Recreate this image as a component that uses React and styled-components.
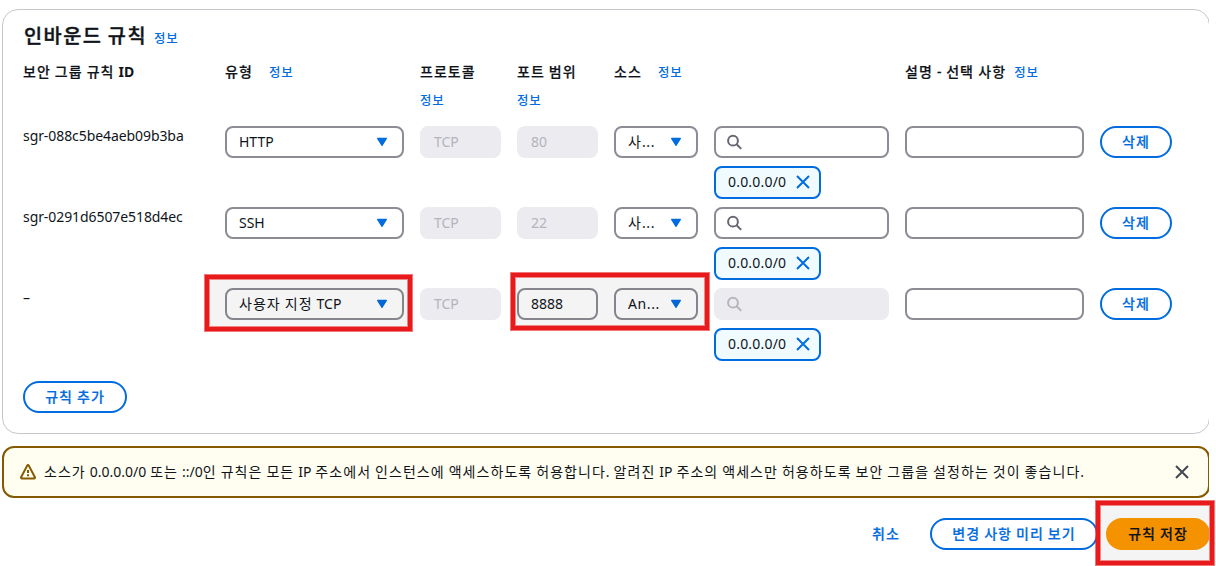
import React from "react";
import styled, { createGlobalStyle, css } from "styled-components";

const blue = "#006ce0";
const ink = "#0f141a";

const GlobalStyle = createGlobalStyle`
  * { box-sizing: border-box; }
  body {
    margin: 0;
    background: #fff;
    color: ${ink};
    font-family: "Noto Sans", "Noto Sans CJK KR", sans-serif;
    font-size: 14px;
    line-height: 20px;
    overflow: hidden;
  }
`;

const Page = styled.main`
  position: relative;
  width: 1216px;
  height: 566px;
  overflow: hidden;
`;

const Content = styled.div`
  width: 1209px;
  height: 566px;
  padding: 9px 0 0 2px;
  overflow: hidden;
  display: flex;
  flex-direction: column;
  & > * { width: 1208px; flex: none; }
`;

const Panel = styled.section`
  height: 425px;
  border: 1px solid #c6c6cd;
  border-radius: 16px;
  padding: 0 20px;
`;

const Run = styled.span`
  white-space: pre;
  word-spacing: 0.3px;
  letter-spacing: ${(p) => p.$ls || 0}px;
`;

const Hangul = styled.span`
  letter-spacing: 0.075em;
`;

/* Hangul syllables are set wider than the Latin text around them. */
const Text = ({ children, ls }) => (
  <Run $ls={ls}>
    {children.split(/([가-힣]+)/).map((part, i) => (i % 2 ? <Hangul key={i}>{part}</Hangul> : part))}
  </Run>
);

const TitleBar = styled.header`
  display: flex;
  align-items: baseline;
  gap: 7px;
  height: 48px;
  padding: 14px 0 0 1px;
`;

const Title = styled.h2`
  margin: 0;
  font-size: 19.7px;
  line-height: 24px;
  font-weight: 500;
  -webkit-text-stroke: 0.4px currentColor;
`;

const InfoLink = styled.a`
  color: ${blue};
  font-size: 12.4px;
  font-weight: 500;
  line-height: 22px;
  white-space: nowrap;
`;

const Info = () => <InfoLink><Text>정보</Text></InfoLink>;

const Grid = styled.div`
  display: grid;
  grid-template-columns: 186px 179px 81px 81px 84px 175px 179px 72px;
  column-gap: 16px;
`;

const HeadGrid = styled(Grid)`
  height: 68px;
  padding-top: 4px;
`;

const HeadCell = styled.div`
  display: flex;
  flex-direction: ${(p) => (p.$stack ? "column" : "row")};
  gap: ${(p) => (p.$stack ? 8 : p.$gap)}px;
  font-weight: 500;
  white-space: nowrap;
  height: 20px;
  & > ${Run} { -webkit-text-stroke: 0.2px currentColor; }
`;

const Strong = styled.b`
  font-weight: 700;
`;

const RuleGrid = styled(Grid)`
  height: 81px;
`;

const RuleId = styled.div`
  white-space: nowrap;
  letter-spacing: -0.08px;
`;

const field = css`
  height: 32px;
  border: 2px solid #8c8c94;
  border-radius: 8px;
  display: flex;
  align-items: center;
  padding: 0 12px;
  white-space: nowrap;
`;

const Field = styled.div`
  ${field}
  ${(p) => p.$disabled && css`
    background: #ebebf0;
    border-color: #ebebf0;
    color: #b4b4bb;
  `}
`;

const SearchField = styled(Field)`
  padding-left: 11px;
`;

const Select = styled.div`
  ${field}
  justify-content: space-between;
  padding-right: 14px;
`;

const SourceCell = styled.div`
  display: flex;
  flex-direction: column;
  align-items: flex-start;
  gap: 8px;
  & > :first-child { width: 100%; }
`;

const Tag = styled.div`
  height: 33px;
  width: 107px;
  border: 2px solid ${blue};
  border-radius: 8px;
  background: #f0fbff;
  display: flex;
  align-items: center;
  justify-content: space-between;
  padding: 0 8px 1px 12px;
`;

const Button = styled.button`
  height: 32px;
  width: ${(p) => p.$w}px;
  padding: 0 0 1px;
  border: 2px solid ${(p) => ({ normal: blue, primary: "#ff9900", link: "transparent" })[p.$kind]};
  border-radius: 16px;
  background: ${(p) => (p.$kind === "primary" ? "#ff9900" : "transparent")};
  color: ${(p) => (p.$kind === "primary" ? ink : blue)};
  font: 500 14px/20px "Noto Sans", "Noto Sans CJK KR", sans-serif;
  -webkit-text-stroke: 0.2px currentColor;
  white-space: nowrap;
`;

const AddRow = styled.div`
  padding-top: 12px;
`;

const Alert = styled.div`
  margin-top: 12px;
  height: 52px;
  border: 2px solid #855900;
  border-radius: 12px;
  background: #fffef0;
  display: flex;
  align-items: center;
  padding: 0 18px 0 16px;
  svg { flex: none; }
`;

const AlertText = styled.p`
  flex: 1;
  margin: 0 0 0 8px;
  white-space: nowrap;
`;

const Actions = styled.footer`
  display: flex;
  justify-content: flex-end;
  gap: 8px;
  padding-top: 20px;
`;

const Highlight = styled.div`
  position: absolute;
  left: ${(p) => p.$x}px;
  top: ${(p) => p.$y}px;
  width: ${(p) => p.$w}px;
  height: ${(p) => p.$h}px;
  border: 4px solid #e81a1c;
  background: rgba(0, 0, 0, 0.043);
  box-shadow: 0 0 0 1px rgba(232, 26, 28, 0.6), inset 0 0 0 1px rgba(232, 26, 28, 0.5);
  pointer-events: none;
`;

const Caret = () => (
  <svg width="12" height="10" viewBox="0 0 12 10">
    <path d="M1.6 1.4h8.8L6 8.4z" fill={blue} stroke={blue} strokeWidth="1.2" strokeLinejoin="round" />
  </svg>
);

const SearchIcon = ({ color }) => (
  <svg width="16" height="16" viewBox="0 0 16 16" fill="none" stroke={color} strokeWidth="2">
    <circle cx="6" cy="6.7" r="4.9" />
    <path d="M9.6 10.3 14.2 14.9" />
  </svg>
);

const Cross = ({ color }) => (
  <svg width="16" height="16" viewBox="0 0 16 16" fill="none" stroke={color} strokeWidth="2">
    <path d="m2 2 12 12M14 2 2 14" />
  </svg>
);

const WarningIcon = () => (
  <svg width="16" height="16" viewBox="0 0 16 16" fill="none" stroke="#855900" strokeWidth="2" strokeLinejoin="round">
    <path d="M7.2 1.6a.9.9 0 0 1 1.6 0l6.1 11.6a.9.9 0 0 1-.8 1.3H1.9a.9.9 0 0 1-.8-1.3z" />
    <path d="M8 6v3M8 10.2v2" />
  </svg>
);

const rules = [
  { id: "sgr-088c5be4aeb09b3ba", type: "HTTP", port: "80", source: "사..." },
  { id: "sgr-0291d6507e518d4ec", type: "SSH", port: "22", source: "사..." },
  { id: "–", type: "사용자 지정 TCP", port: "8888", source: "An...", custom: true },
];

const Rule = ({ rule }) => (
  <RuleGrid>
    <RuleId>{rule.id}</RuleId>
    <Select><Text>{rule.type}</Text><Caret /></Select>
    <Field $disabled>TCP</Field>
    <Field $disabled={!rule.custom}>{rule.port}</Field>
    <Select><Text ls={0.6}>{rule.source}</Text><Caret /></Select>
    <SourceCell>
      <SearchField $disabled={rule.custom}>
        <SearchIcon color={rule.custom ? "#b4b4bb" : "#656871"} />
      </SearchField>
      <Tag><Text ls={0.2}>0.0.0.0/0</Text><Cross color={blue} /></Tag>
    </SourceCell>
    <Field />
    <Button $kind="normal" $w={72}><Text>삭제</Text></Button>
  </RuleGrid>
);

export default function App() {
  return (
    <Page>
      <GlobalStyle />
      <Content>
        <Panel>
          <TitleBar>
            <Title><Text>인바운드 규칙</Text></Title>
            <Info />
          </TitleBar>
          <HeadGrid>
            <HeadCell><Text>보안 그룹 규칙 </Text><Strong>ID</Strong></HeadCell>
            <HeadCell $gap={16}><Text>유형</Text><Info /></HeadCell>
            <HeadCell $stack><Text>프로토콜</Text><Info /></HeadCell>
            <HeadCell $stack><Text>포트 범위</Text><Info /></HeadCell>
            <HeadCell $gap={16}><Text>소스</Text><Info /></HeadCell>
            <HeadCell />
            <HeadCell $gap={8}><Text ls={0.3}>설명 - 선택 사항</Text><Info /></HeadCell>
          </HeadGrid>
          {rules.map((rule) => <Rule key={rule.id} rule={rule} />)}
          <AddRow><Button $kind="normal" $w={104}><Text>규칙 추가</Text></Button></AddRow>
        </Panel>
        <Alert>
          <WarningIcon />
          <AlertText>
            <Text>소스가 0.0.0.0/0 또는 ::/0인 규칙은 모든 IP 주소에서 인스턴스에 액세스하도록 허용합니다. 알려진 IP 주소의 액세스만 허용하도록 보안 그룹을 설정하는 것이 좋습니다.</Text>
          </AlertText>
          <Cross color="#424650" />
        </Alert>
        <Actions>
          <Button $kind="link" $w={72}><Text>취소</Text></Button>
          <Button $kind="normal" $w={168}><Text>변경 사항 미리 보기</Text></Button>
          <Button $kind="primary" $w={104}><Text>규칙 저장</Text></Button>
        </Actions>
      </Content>
      <Highlight $x={205} $y={275} $w={207} $h={56} />
      <Highlight $x={511} $y={273} $w={198} $h={57} />
      <Highlight $x={1096} $y={501} $w={118} $h={64} />
    </Page>
  );
}
